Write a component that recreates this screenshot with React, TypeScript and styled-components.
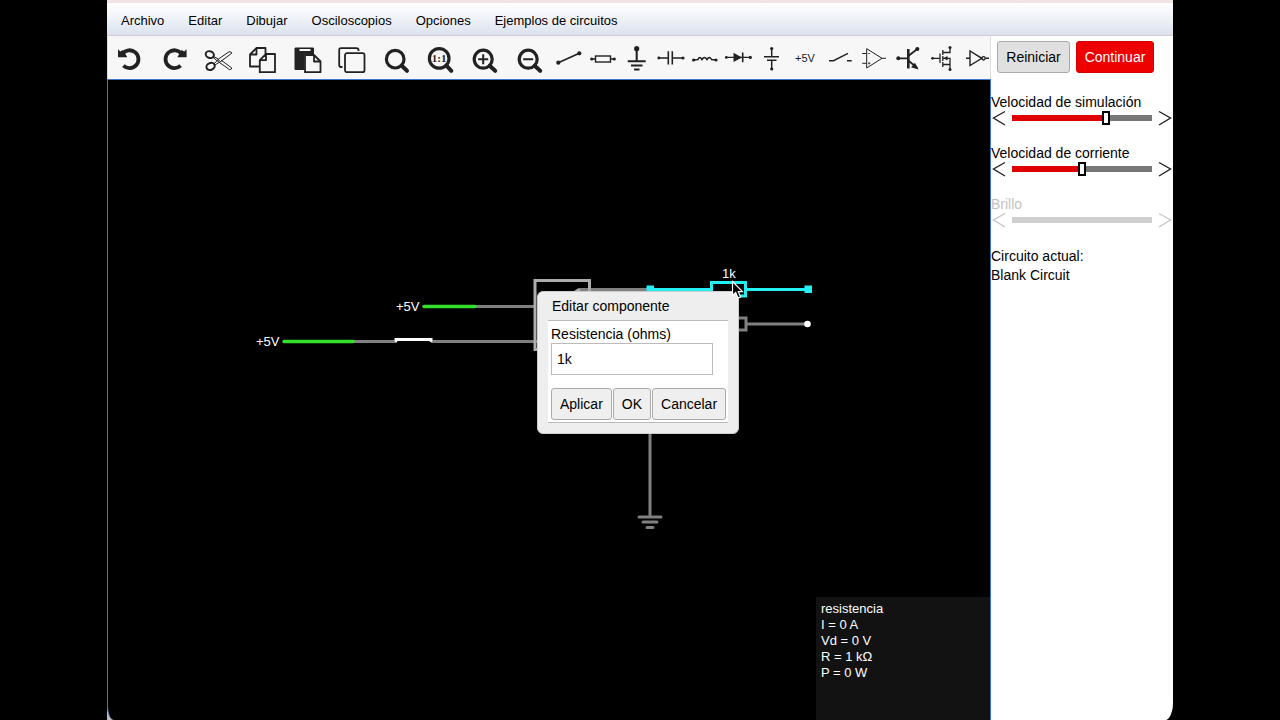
import React, { useState } from "react";
import styled, { createGlobalStyle } from "styled-components";

const GlobalStyle = createGlobalStyle`
  * { box-sizing: border-box; }
  body {
    margin: 0;
    background: #000;
    color: #000;
    font: 14px/16px "Liberation Sans", Arial, sans-serif;
  }
  button, input { font: inherit; color: inherit; margin: 0; }
`;

const Page = styled.div`
  display: flex;
  min-height: 100vh;
  padding: 0 107px;
`;

const Window = styled.div`
  flex: 1;
  min-width: 0;
  display: flex;
  flex-direction: column;
  background: #bcbcbc;
  border-top: 3px solid #f3e4e4;
  border-bottom-right-radius: 8px 18px;
  overflow: hidden;
`;

const MenuBar = styled.nav`
  display: flex;
  gap: 24px;
  height: 33px;
  padding: 0 14px;
  align-items: center;
  background: linear-gradient(#fff, #f2f5f9 40%, #dbe2ee);
  border-bottom: 1px solid #d2cdd4;
`;

const MenuItem = styled.button`
  padding: 4px 0 0;
  border: 0;
  background: none;
  font-size: 13px;
  white-space: nowrap;
`;

const Body = styled.div`
  flex: 1;
  display: flex;
  min-height: 0;
`;

const Workspace = styled.main`
  flex: 1;
  min-width: 0;
  display: flex;
  flex-direction: column;
`;

const Toolbar = styled.div`
  display: flex;
  height: 43px;
  background: #f7f7f7;
  overflow: hidden;
  border: solid #ddd;
  border-width: 0 1px;
`;

const ToolGroup = styled.div<{ $width: number }>`
  display: flex;
  flex: 0 0 ${(p) => p.$width}px;
`;

const ToolButton = styled.button<{ $drop: number }>`
  flex: 1;
  display: flex;
  align-items: center;
  justify-content: center;
  padding: ${(p) => p.$drop}px 0 0;
  border: 0;
  background: none;
  font-size: 11px;
  color: #222;
`;

const Glyph = styled.svg`
  flex: none;
  fill: none;
  stroke: #222;
  overflow: visible;
`;

const Canvas = styled.section`
  flex: 1;
  position: relative;
  background: #000;
  border: 1px solid #3f78cc;
  border-bottom: 0;
  border-bottom-left-radius: 7px 14px;
  overflow: hidden;
`;

const Circuit = styled.svg`
  display: block;
  fill: none;
  stroke-width: 3;
  text {
    fill: #fff;
    font-size: 13px;
  }
`;

const Info = styled.div`
  position: absolute;
  right: 0;
  bottom: 0;
  width: 174px;
  height: 123px;
  padding: 4px 5px;
  background: #121212;
  color: #fff;
  font-size: 13px;
  line-height: 16px;
`;

const Dialog = styled.form`
  position: absolute;
  left: 429px;
  top: 211px;
  width: 202px;
  padding: 0 10px 10px;
  background: #eee;
  border: 1px solid #ccc;
  border-radius: 6px;
`;

const DialogTitle = styled.h2`
  margin: 0;
  padding: 0 4px;
  font-size: 14px;
  font-weight: 400;
  line-height: 28px;
`;

const DialogBody = styled.div`
  padding: 5px 3px 2px;
  background: #fff;
  border: solid #bbb;
  border-width: 1px 0;
`;

const FieldLabel = styled.label`
  display: block;
  line-height: 17px;
`;

const Field = styled.input`
  display: block;
  width: 162px;
  height: 32px;
  padding: 0 5px;
  border: 1px solid #bbb;
  background: #fff;
  outline: none;
`;

const DialogActions = styled.div`
  display: flex;
  gap: 1px;
  margin-top: 13px;
`;

const Button = styled.button<{ $primary?: boolean; $tone?: string }>`
  height: 32px;
  padding: 0 8px;
  border: 1px solid ${(p) => (p.$primary ? "#d50000" : "#aaa")};
  border-radius: 3px;
  background: ${(p) => (p.$primary ? "#ee0000" : p.$tone || "#efefef")};
  color: ${(p) => (p.$primary ? "#fff" : "#000")};
  white-space: nowrap;
`;

const WideButtons = styled.div`
  display: grid;
  grid-template-columns: 73px 78px;
  gap: 6px;
  padding: 0 6px;
  ${Button} { padding: 0; }
`;

const Sidebar = styled.aside`
  flex: 0 0 182px;
  padding-top: 5px;
  background: #fff;
`;

const Sliders = styled.div`
  display: grid;
  gap: 19px;
  margin-top: 21px;
`;

const SliderBlock = styled.div<{ $off?: boolean }>`
  opacity: ${(p) => (p.$off ? 0.25 : 1)};
`;

const SliderLabel = styled.label`
  display: block;
`;

const SliderRow = styled.div`
  display: flex;
  height: 16px;
`;

const Step = styled.button`
  flex: 0 0 21px;
  height: 16px;
  padding: 0;
  border: 0;
  background: none;
  svg { display: block; fill: none; stroke: #222; stroke-width: 1.4; }
`;

const Range = styled.input<{ $off?: boolean }>`
  flex: 1;
  min-width: 0;
  height: 16px;
  appearance: none;
  background: linear-gradient(
      to right,
      ${(p) => (p.$off ? "#444" : "#df0000")} var(--fill),
      ${(p) => (p.$off ? "#444" : "#777")} var(--fill)
    )
    center / 100% 6px no-repeat;
  &::-webkit-slider-thumb {
    appearance: none;
    width: 8px;
    height: 14px;
    border: 2px solid #000;
    background: #fff;
    opacity: ${(p) => (p.$off ? 0 : 1)};
  }
`;

const Current = styled.p`
  margin: 19px 0 0;
  line-height: 19px;
`;

const Pointer = styled.svg`
  position: absolute;
  left: 623px;
  top: 200px;
`;

const Lens = ({ x, y, r, tx, ty }: { x: number; y: number; r: number; tx: number; ty: number }) => (
  <>
    <circle cx={x} cy={y} r={r} strokeWidth="3.2" />
    <path d={`M${x + r * 0.72} ${y + r * 0.72}L${tx} ${ty}`} strokeWidth="4" strokeLinecap="round" />
  </>
);

const editTools: [string, React.ReactNode][] = [
  ["Deshacer", <>
    <path d="M7.6 8.6A8.9 8.9 0 1 1 8.4 20.6" strokeWidth="3.8" />
    <path d="M3 4.3L5.3 6.6L8 5L12.3 12.2H3Z" fill="#222" stroke="none" />
  </>],
  ["Rehacer", <>
    <path d="M21.400 8.600A8.900 8.900 0 1 0 20.600 20.600" strokeWidth="3.8" />
    <path d="M26.600 4.300L24.300 6.600L21.600 5L17.300 12.200H26.600Z" fill="#222" stroke="none" />
  </>],
  ["Cortar", <>
    <ellipse cx="5.8" cy="9.6" rx="4.2" ry="3.3" strokeWidth="2" transform="rotate(20 5.8 9.6)" />
    <ellipse cx="6.6" cy="21.4" rx="4.3" ry="3.4" strokeWidth="2" transform="rotate(-25 6.6 21.4)" />
    <path d="M9.5 11.5L14.5 14L25 6.8Q27.5 6.5 27.8 8.2L17 16.3L10.5 20.2M10 19L14.5 14M9.5 12.8L14.5 16.8L25.5 24.6Q27.5 24.8 27.8 23L17 15" strokeWidth="1" />
    <circle cx="14.7" cy="15.5" r=".7" strokeWidth=".7" />
  </>],
  ["Copiar", <g strokeWidth="1.8" strokeLinejoin="round">
    <path d="M17.5 9V3H8.5L2 9.5V21.5H11.5M8.5 3V9.5H2" />
    <path d="M18 9H27V27.2H11.8V15.2ZM18 9V15.2H11.8" />
  </g>],
  ["Pegar", <g strokeLinejoin="round">
    <path d="M2 3H20.5V9H11V24.5H2Z" fill="#222" strokeWidth="1" />
    <path d="M6.5 5H17.5" stroke="#f7f7f7" strokeWidth="2" />
    <path d="M12 10H21L27.5 16.5V27.2H12Z" fill="#f7f7f7" strokeWidth="1.8" />
    <path d="M21 10V16.5H27.5" strokeWidth="1.8" />
  </g>],
  ["Duplicar", <g strokeWidth="1.8">
    <path d="M21.5 6V5Q21.5 3.2 19.5 3.2H4Q2.2 3.2 2.2 5V20Q2.2 22 4 22H5.5" />
    <rect x="8" y="8.2" width="19.5" height="19" rx="2" />
  </g>],
  ["Buscar", <Lens x={13.2} y={14.2} r={8.8} tx={25} ty={25.8} />],
  ["Zoom 100%", <>
    <Lens x={13.2} y={13.4} r={9.8} tx={25.3} ty={25.8} />
    <text x="13.2" y="17" textAnchor="middle" fontSize="11" fontWeight="700" fontFamily="Liberation Serif, serif" fill="#222" stroke="none">1:1</text>
  </>],
  ["Acercar", <>
    <Lens x={13.2} y={14.2} r={9} tx={25.2} ty={25.8} />
    <path d="M8.2 14.2H18.2M13.2 9.2V19.2" strokeWidth="2" />
  </>],
  ["Alejar", <>
    <Lens x={13.2} y={14.2} r={9} tx={25.2} ty={25.8} />
    <path d="M8.2 14.2H18.2" strokeWidth="2" />
  </>],
];

const Dot = ({ x, y, r = 1.6 }: { x: number; y: number; r?: number }) => (
  <circle cx={x} cy={y} r={r} fill="#222" stroke="none" />
);

const partTools: [string, React.ReactNode][] = [
  ["Cable", <><path d="M4.3 18.7L25.3 9.3" strokeWidth="1.7" /><Dot x={4.3} y={18.7} r={2.1} /><Dot x={25.3} y={9.3} r={2.1} /></>],
  ["Resistencia", <><path d="M3.7 15H7.5M22.5 15H26.3" strokeWidth="1.4" /><rect x="7.5" y="12" width="15" height="6" strokeWidth="1.4" /><Dot x={3.7} y={15} /><Dot x={26.3} y={15} /></>],
  ["Tierra", <><Dot x={14.7} y={4.7} r={2.6} /><path d="M14.7 5V17M5.7 17.3H23.7M9 21.5H20.5M12 25.5H17.5" strokeWidth="2.1" /></>],
  ["Condensador", <><path d="M2.5 14H12M16.3 14H27" strokeWidth="1.4" /><path d="M12.3 7.3V20.5M16.3 7.3V20.5" strokeWidth="1.6" /><Dot x={2.8} y={14} r={1.4} /><Dot x={27} y={14} /></>],
  ["Bobina", <><path d="M3.3 16L8 15.5Q9.5 11.5 12 15.5Q14.5 11.5 17 15.5Q19.5 11.5 21.5 15.5L26 16" strokeWidth="1.5" /><Dot x={3.6} y={16} /><Dot x={26} y={16} /></>],
  ["Diodo", <><path d="M2 13.4H26.5" strokeWidth="1.4" /><path d="M9.5 8.8L18 13.4L9.5 18Z" fill="#222" stroke="none" /><path d="M18.7 8.5V18.3" strokeWidth="1.6" /><Dot x={2.3} y={13.4} r={1.4} /><Dot x={26.3} y={13.4} /></>],
  ["Pila", <><path d="M13.7 4V12.7M13.7 16.3V25" strokeWidth="1.5" /><path d="M6 12.7H21M9 16.3H18.5" strokeWidth="1.5" /><Dot x={13.7} y={4.5} /><Dot x={13.7} y={25} /></>],
  ["+5V", <text x="13" y="18" textAnchor="middle" fontSize="11" fill="#222" stroke="none">+5V</text>],
  ["Interruptor", <path d="M3 16.7H7.5L22 9.3M21 16.7H25.7" strokeWidth="1.4" />],
  ["Amplificador", <><path d="M6.7 4.7V24L22 14.3ZM2.2 9.5H6.7M2.2 19.3H6.7M22 14.3H26" strokeWidth="1" /><path d="M8 9.5H10M8 19.3H10.5M9.2 18V20.5" strokeWidth=".7" /></>],
  ["Transistor", <><path d="M4.3 14.3H14.3M14.3 12L23.3 5M14.3 16.5L23.3 24" strokeWidth="1.8" /><path d="M14.3 5V24.5" strokeWidth="2.6" /><path d="M24.5 25.5L17 23.3L21 18.8Z" fill="#222" stroke="none" /><Dot x={4.3} y={14.3} r={2} /><Dot x={23.3} y={5} r={2.1} /></>],
  ["MOSFET", <><path d="M5 14.3H12M12 9.5V19M14.8 6V11M14.8 12V17M14.8 18V23M14.8 8.5H22V3.5M14.8 20.5H22V25.5M14.8 14.3H22V20.5" strokeWidth="1.3" /><path d="M15.3 14.3L19.5 12V16.6Z" fill="#222" stroke="none" /><Dot x={4.6} y={14.3} r={1.4} /><Dot x={22} y={3.5} r={1.5} /><Dot x={22} y={25.6} r={1.5} /></>],
  ["Inversor", <><path d="M4 14.3H8M8 7V21.6L19.8 14.3ZM23.3 14.3H27" strokeWidth="1.4" /><circle cx="21.5" cy="14.3" r="1.7" strokeWidth="1.3" /></>],
];

const SpeedSlider = ({ id, label, initial, off }: { id: string; label: string; initial: number; off?: boolean }) => {
  const [value, setValue] = useState(initial);
  const step = (d: number) => setValue((v) => Math.max(0, Math.min(100, v + d)));
  return (
    <SliderBlock $off={off}>
      <SliderLabel htmlFor={id}>{label}</SliderLabel>
      <SliderRow>
        <Step type="button" aria-label={`Reducir ${label}`} disabled={off} onClick={() => step(-1)}>
          <svg width="21" height="16"><path d="M14 1.5L2.5 8L14 15" /></svg>
        </Step>
        <Range
          id={id}
          type="range"
          min={0}
          max={100}
          value={value}
          disabled={off}
          $off={off}
          onChange={(e) => setValue(Number(e.target.value))}
          style={{ "--fill": `${value}%` } as React.CSSProperties}
        />
        <Step type="button" aria-label={`Aumentar ${label}`} disabled={off} onClick={() => step(1)}>
          <svg width="21" height="16"><path d="M7 1.5L18.5 8L7 15" /></svg>
        </Step>
      </SliderRow>
    </SliderBlock>
  );
};

const CircuitDrawing = () => (
  <Circuit width="883" height="640" viewBox="108 80 883 640">
    <g stroke="#808080">
      <path d="M476 306.500H535M354 341.500H397M431 341.500H540M580 289.500H650" />
      <path d="M730 318H746V330H730M747 324H808M650 430V516" />
      <path d="M639 517H661M643 522H657M647 527.500H653" strokeLinecap="round" />
    </g>
    <path d="M540 349.500H535V280.500H589.500V300M572 294L580 289" stroke="#adadad" />
    <g stroke="#35e02b" strokeWidth="3.500" strokeLinecap="round">
      <path d="M424 306.500H475M284 341.500H353" />
    </g>
    <path d="M396 340.500V339.500H431V340.500" stroke="#fff" strokeLinecap="round" />
    <path d="M650 289.500H711M747 289.500H808M711.500 282.500H745.500V296H711.500Z" stroke="#22f0f2" />
    <path d="M646.500 285.500H654V293H646.500ZM804.500 285.500H812V293H804.500Z" fill="#22f0f2" />
    <circle cx="807.500" cy="324" r="3.300" fill="#fff" />
    <text x="396" y="311">+5V</text>
    <text x="256" y="346">+5V</text>
    <text x="722" y="278">1k</text>
  </Circuit>
);

export default function App() {
  const [ohms, setOhms] = useState("1k");
  return (
    <Page>
      <GlobalStyle />
      <Window>
        <MenuBar>
          {["Archivo", "Editar", "Dibujar", "Osciloscopios", "Opciones", "Ejemplos de circuitos"].map((m) => (
            <MenuItem key={m} type="button">{m}</MenuItem>
          ))}
        </MenuBar>
        <Body>
          <Workspace>
            <Toolbar>
              <ToolGroup $width={444}>
                {editTools.map(([name, art]) => (
                  <ToolButton key={name} type="button" aria-label={name} $drop={5}>
                    <Glyph width="30" height="30">{art}</Glyph>
                  </ToolButton>
                ))}
              </ToolGroup>
              <ToolGroup $width={442}>
                {partTools.map(([name, art]) => (
                  <ToolButton key={name} type="button" aria-label={name} $drop={1}>
                    <Glyph width="30" height="28">{art}</Glyph>
                  </ToolButton>
                ))}
              </ToolGroup>
            </Toolbar>
            <Canvas>
              <CircuitDrawing />
              <Info>
                <div>resistencia</div>
                <div>I = 0 A</div>
                <div>Vd = 0 V</div>
                <div>R = 1 kΩ</div>
                <div>P = 0 W</div>
              </Info>
              <Dialog onSubmit={(e) => e.preventDefault()}>
                <DialogTitle>Editar componente</DialogTitle>
                <DialogBody>
                  <FieldLabel htmlFor="ohms">Resistencia (ohms)</FieldLabel>
                  <Field id="ohms" type="text" value={ohms} onChange={(e) => setOhms(e.target.value)} />
                  <DialogActions>
                    <Button type="button">Aplicar</Button>
                    <Button type="submit">OK</Button>
                    <Button type="button">Cancelar</Button>
                  </DialogActions>
                </DialogBody>
              </Dialog>
              <Pointer width="14" height="20">
                <path d="M1.500 1.500V15.500L4.700 12.600L7 18L9.600 16.900L7.300 11.700H11.500Z" fill="#000" stroke="#fff" strokeWidth="1.200" />
              </Pointer>
            </Canvas>
          </Workspace>
          <Sidebar>
            <WideButtons>
              <Button type="button" $tone="#e0e0e0">Reiniciar</Button>
              <Button type="button" $primary>Continuar</Button>
            </WideButtons>
            <Sliders>
              <SpeedSlider id="sim-speed" label="Velocidad de simulación" initial={68} />
              <SpeedSlider id="cur-speed" label="Velocidad de corriente" initial={50} />
              <SpeedSlider id="bright" label="Brillo" initial={50} off />
            </Sliders>
            <Current>
              Circuito actual:
              <br />
              Blank Circuit
            </Current>
          </Sidebar>
        </Body>
      </Window>
    </Page>
  );
}
